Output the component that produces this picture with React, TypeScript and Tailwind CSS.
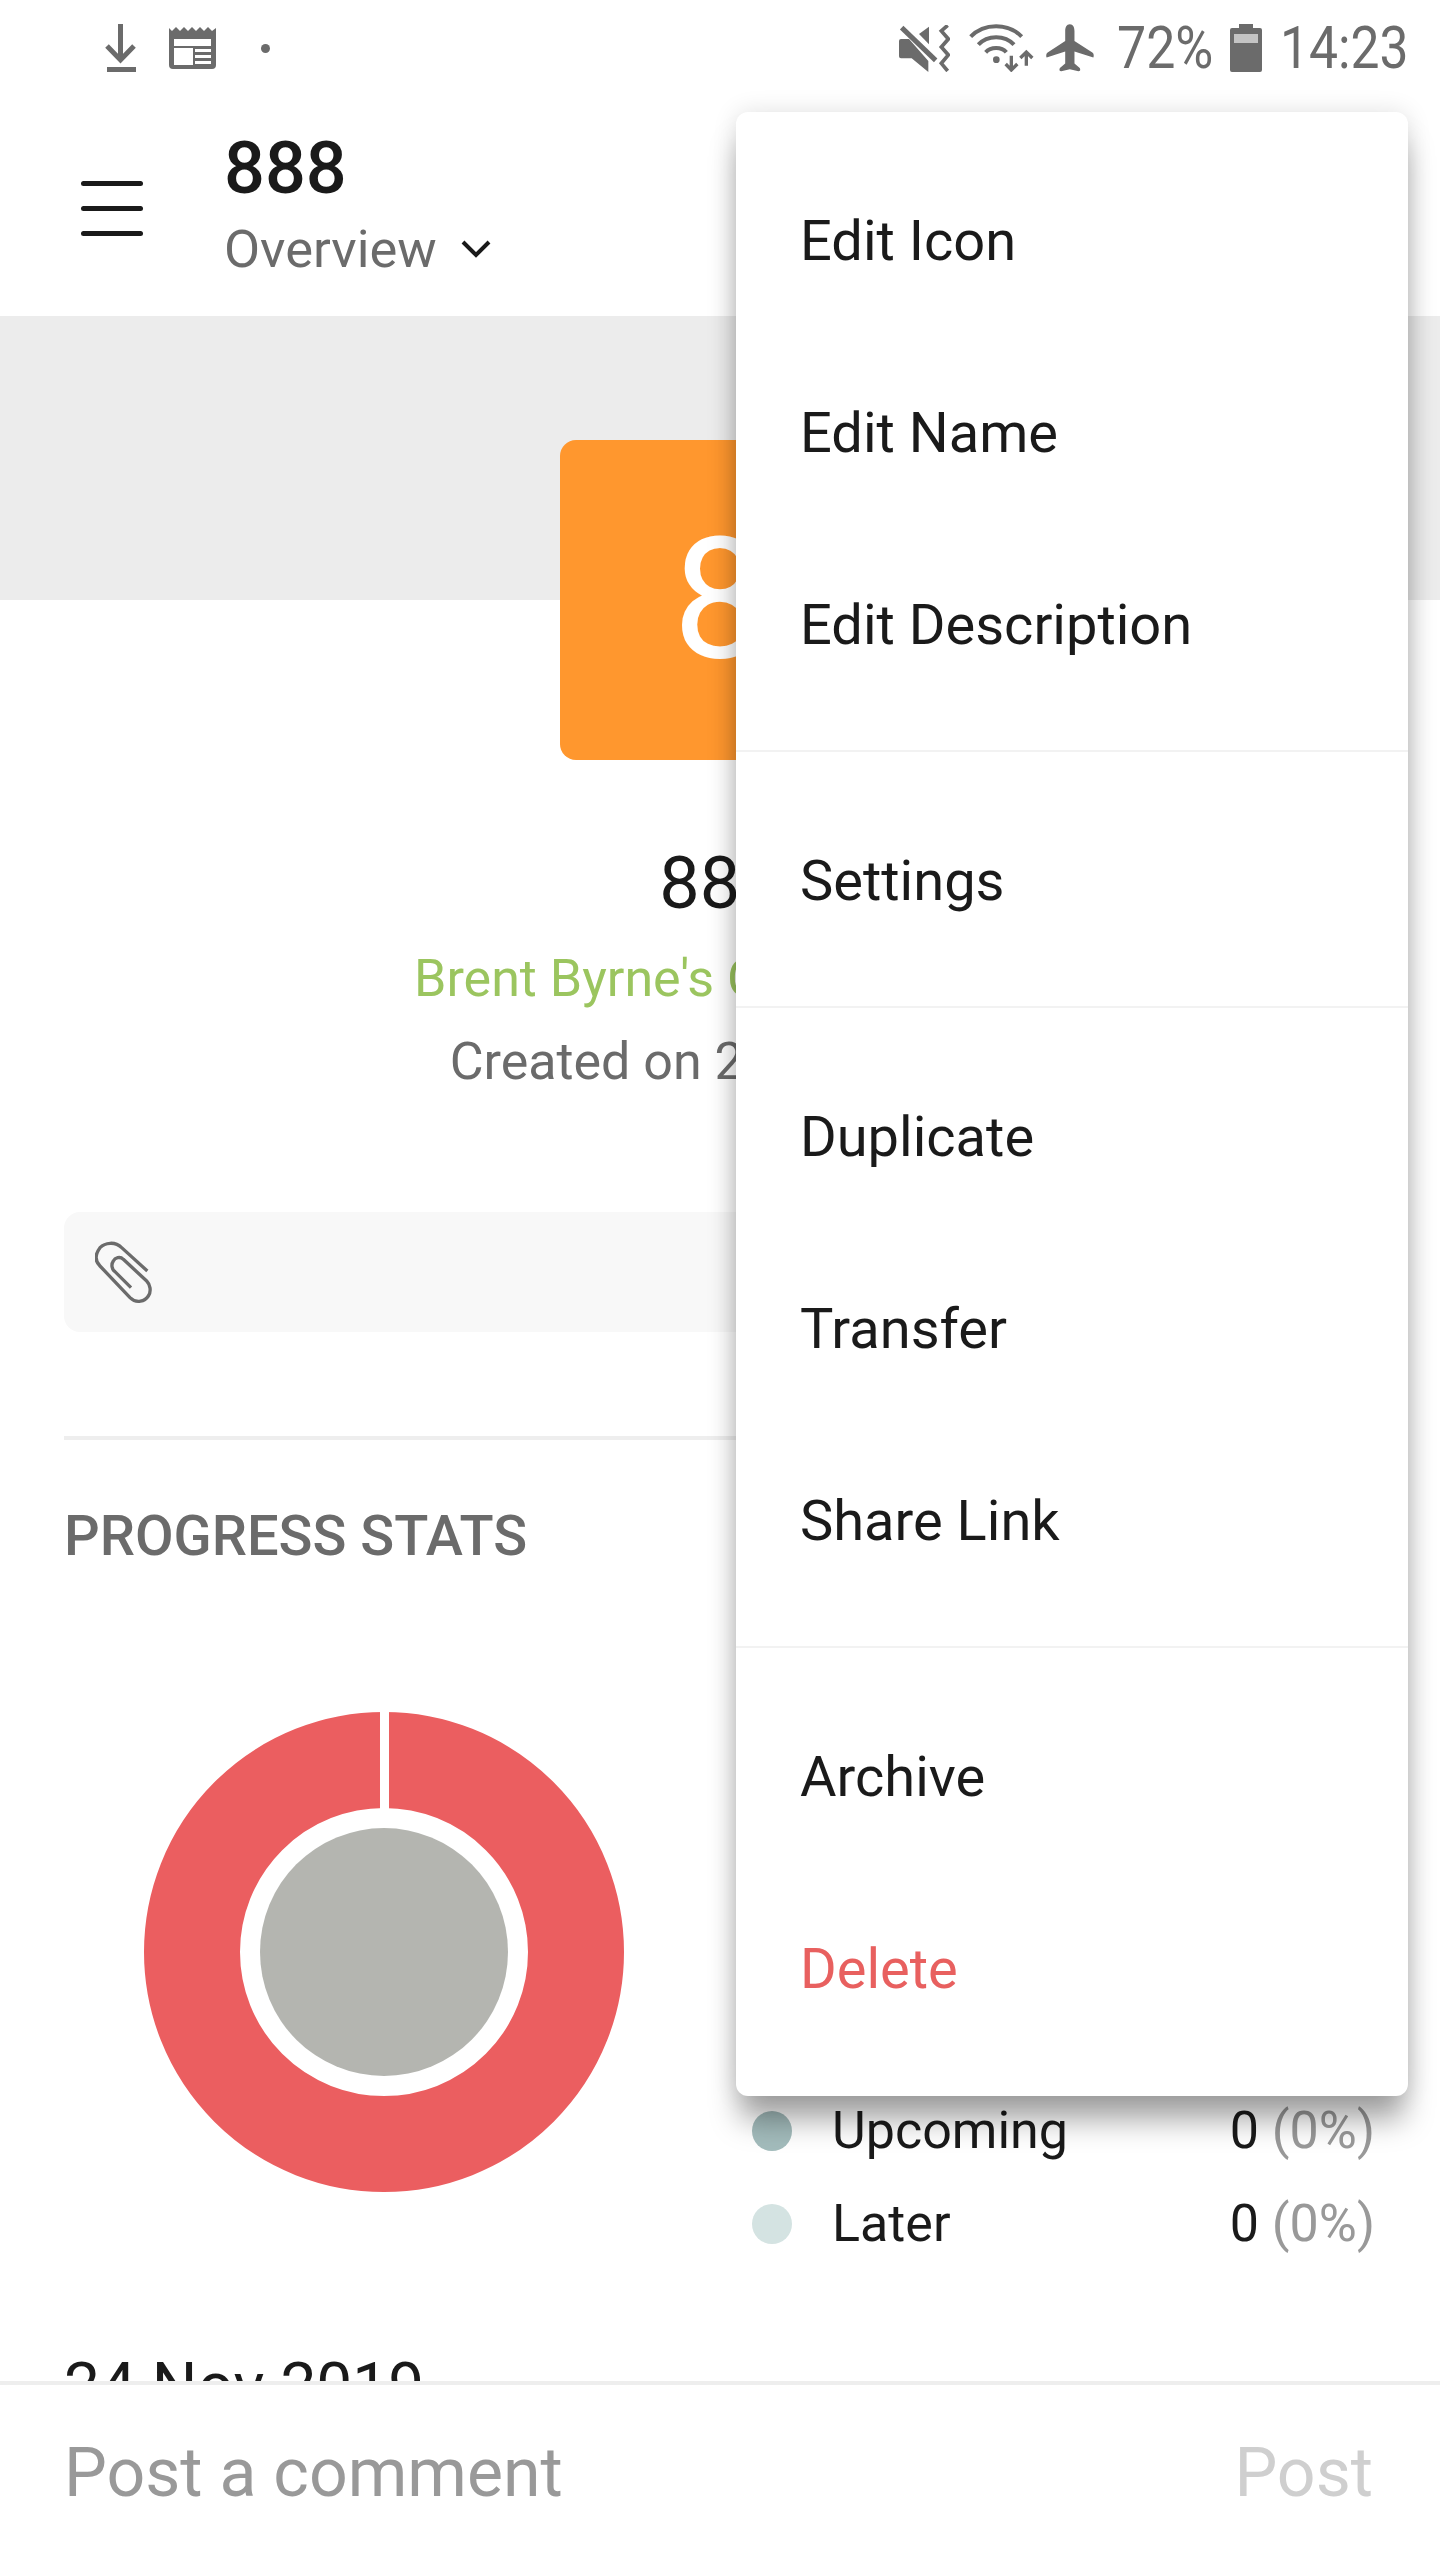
import React from "react";

function Mute() {
  return (
    <svg width="51" height="47" viewBox="0 0 153 141">
      <path d="M6 42 H30 L88 108 V141 L38 100 H6 a6 6 0 0 1 -6 -6 V48 a6 6 0 0 1 6 -6 Z" fill="#6b6b6b" />
      <path d="M60 27 L90 5 V58 Z" fill="#6b6b6b" />
      <path d="M8 8 L110 106" stroke="#6b6b6b" strokeWidth="15" />
      <path d="M146 1 L127 18 L148 42 L127 66 L148 90 L127 115 L146 138" stroke="#6b6b6b" strokeWidth="11" fill="none" />
    </svg>
  );
}

function Wifi() {
  return (
    <svg width="65" height="48" viewBox="0 0 195 144" fill="none">
      <path d="M5 38 C45 -4 118 -4 158 38" stroke="#6b6b6b" strokeWidth="12" />
      <path d="M28 62 C55 32 108 32 135 62" stroke="#6b6b6b" strokeWidth="12" />
      <path d="M50 85 C65 68 98 68 112 85" stroke="#6b6b6b" strokeWidth="12" />
      <circle cx="82" cy="107" r="10" fill="#6b6b6b" />
      <path d="M127 95 V132 M110 120 L127 138 L145 120" stroke="#6b6b6b" strokeWidth="10" />
      <path d="M172 125 V84 M154 102 L172 84 L190 102" stroke="#6b6b6b" strokeWidth="10" />
    </svg>
  );
}

function Plane() {
  return (
    <svg width="48" height="48" viewBox="0 0 145 143">
      <path
        d="M72 0 C82 0 86 10 86 20 V50 L140 85 C145 88 145 98 143 100 L86 82 V118 L102 132 C105 138 103 142 98 142 L72 136 L46 142 C41 142 39 138 42 132 L58 118 V82 L2 100 C0 98 0 88 5 85 L58 50 V20 C58 10 62 0 72 0 Z"
        fill="#6b6b6b"
      />
    </svg>
  );
}

function Battery() {
  return (
    <svg width="32" height="48" viewBox="0 0 32 48">
      <path d="M9 0 H23 V4 H30 a2 2 0 0 1 2 2 V46 a2 2 0 0 1 -2 2 H2 a2 2 0 0 1 -2 -2 V6 a2 2 0 0 1 2 -2 H9 Z" fill="#6b6b6b" />
      <rect x="4" y="10" width="24" height="9" fill="#c4c4c4" />
    </svg>
  );
}

function Download() {
  return (
    <svg width="32" height="48" viewBox="0 0 32 48" fill="none">
      <path d="M15.5 0 V36" stroke="#6b6b6b" strokeWidth="5" />
      <path d="M2 22 L15.5 36 L29 22" stroke="#6b6b6b" strokeWidth="5" />
      <rect x="2" y="43" width="29" height="5" fill="#6b6b6b" />
    </svg>
  );
}

function News() {
  return (
    <svg width="47" height="42" viewBox="0 0 47 42">
      <path d="M0 1 L3 4 L7 0 L11 4 L15 0 L19 4 L23 0 L27 4 L31 0 L35 4 L39 0 L43 4 L47 1 V38 a4 4 0 0 1 -4 4 H4 a4 4 0 0 1 -4 -4 Z" fill="#6b6b6b" />
      <rect x="5" y="12" width="37" height="7" fill="#fff" />
      <rect x="5" y="21" width="19" height="17" fill="#fff" />
      <rect x="26" y="22" width="16" height="3" fill="#fff" />
      <rect x="26" y="28" width="16" height="3" fill="#fff" />
      <rect x="26" y="34" width="16" height="3" fill="#fff" />
    </svg>
  );
}

function Paperclip() {
  return (
    <svg width="57" height="63" viewBox="0 0 171 189" fill="none">
      <path
        d="M157 90 L80 20 C60 0 30 5 15 20 C0 40 0 60 15 75 L105 170 C125 190 150 180 160 165 C170 150 165 130 155 120 L85 55 C75 45 60 50 55 60 C48 70 50 85 60 92 L108 140"
        stroke="#6b6b6b"
        strokeWidth="10"
      />
    </svg>
  );
}

function Chevron() {
  return (
    <svg width="30" height="20" viewBox="0 0 30 20" fill="none">
      <path d="M2 3 L15 16 L28 3" stroke="#1a1a1a" strokeWidth="4" />
    </svg>
  );
}

function Donut() {
  return (
    <svg width="480" height="480" viewBox="0 0 480 480" className="shrink-0">
      <circle cx="240" cy="240" r="192" fill="none" stroke="#eb5e60" strokeWidth="96" />
      <rect x="236" y="0" width="9" height="100" fill="#fff" />
      <circle cx="240" cy="240" r="124" fill="#b4b5b0" />
    </svg>
  );
}

function MenuItem({ label, red }: { label: string; red?: boolean }) {
  return (
    <div className={`flex h-[192px] items-center pl-[64px] pt-[1px] text-[56px] ${red ? "text-[#e8605f]" : "text-[#1a1a1a]"}`}>
      {label}
    </div>
  );
}

function MenuGroup({ items, last }: { items: string[]; last?: boolean }) {
  return (
    <div className={last ? "py-[32px]" : "border-b-[2px] border-[#f2f2f2] pb-[30px] pt-[32px]"}>
      {items.map((i) => (
        <MenuItem key={i} label={i} red={i === "Delete"} />
      ))}
    </div>
  );
}

function LegendRow({ color, label }: { color: string; label: string }) {
  return (
    <div className="flex h-[93px] items-center text-[52px]">
      <div className={`h-[40px] w-[40px] rounded-full ${color}`} />
      <div className="ml-[40px] flex-1 text-[#1a1a1a]">{label}</div>
      <div className="text-[#1a1a1a]">
        0 <span className="text-[#999999]">(0%)</span>
      </div>
    </div>
  );
}

export default function App() {
  return (
    <div className="relative h-[2560px] w-[1440px] overflow-hidden bg-white font-['Roboto',sans-serif]">
      <div className="flex h-[100px] items-start justify-between pl-[105px] pr-[32px] pt-[24px]">
        <div className="flex items-center">
          <Download />
          <div className="ml-[32px]"><News /></div>
          <div className="ml-[45px] h-[9px] w-[9px] rounded-full bg-[#6b6b6b]" />
        </div>
        <div className="flex items-center">
          <Mute />
          <div className="ml-[19px]"><Wifi /></div>
          <div className="ml-[12px]"><Plane /></div>
          <div className="ml-[23px] w-[95px] origin-left scale-x-[0.865] whitespace-nowrap text-[60px] leading-[48px] text-[#6b6b6b]">72%</div>
          <div className="ml-[18px]"><Battery /></div>
          <div className="ml-[18px] w-[128px] origin-left scale-x-[0.86] whitespace-nowrap text-[60px] leading-[48px] text-[#6b6b6b]">14:23</div>
        </div>
      </div>

      <div className="flex h-[216px] items-start pl-[81px]">
        <div className="mt-[81px] flex w-[62px] flex-col gap-[20px]">
          <div className="h-[5px] rounded-full bg-[#1a1a1a]" />
          <div className="h-[5px] rounded-full bg-[#1a1a1a]" />
          <div className="h-[5px] rounded-full bg-[#1a1a1a]" />
        </div>
        <div className="ml-[81px] mt-[27px]">
          <div className="text-[72px] font-medium leading-[84px] text-[#1a1a1a]">888</div>
          <div className="mt-[2px] flex items-center text-[52.5px] leading-[72px] text-[#6b6b6b]">
            Overview
            <div className="ml-[24px]"><Chevron /></div>
          </div>
        </div>
      </div>

      <div className="h-[284px] bg-[#ececec]" />

      <div className="-mt-[160px] flex flex-col items-center">
        <div className="flex h-[320px] w-[320px] items-center justify-center rounded-[16px] bg-[#ff972e] text-[168px] text-white">
          8
        </div>
        <div className="mt-[82px] text-[72px] leading-[84px] text-[#1a1a1a]">888</div>
        <div className="mt-[22px] pr-[5px] text-[52px] leading-[62px] text-[#9bc55f]">Brent Byrne's Organization</div>
        <div className="mt-[21px] pl-[17px] text-[52px] leading-[62px] text-[#6b6b6b]">Created on 24 Nov 2019</div>
      </div>

      <div className="mx-[64px] mt-[119px] flex h-[120px] items-center rounded-[16px] bg-[#f8f8f8] pl-[31px]">
        <Paperclip />
      </div>
      <div className="mx-[64px] mt-[104px] h-[4px] bg-[#eeeeee]" />

      <div className="mx-[64px] mt-[63px] text-[56px] font-medium leading-[66px] text-[#6b6b6b]">PROGRESS STATS</div>

      <div className="mt-[143px] flex items-start pl-[144px] pr-[65px]">
        <Donut />
        <div className="ml-[128px] mt-[372px] flex-1">
          <LegendRow color="bg-[#a3bcbc]" label="Upcoming" />
          <LegendRow color="bg-[#d4e3e2]" label="Later" />
        </div>
      </div>

      <div className="mx-[64px] mt-[79px] text-[64px] leading-[76px] text-[#1a1a1a]">24 Nov 2019</div>

      <div className="absolute bottom-0 left-0 right-0 flex h-[179px] items-center justify-between border-t-[4px] border-[#eeeeee] bg-white pl-[64px] pr-[67px] text-[68px]">
        <span className="text-[#999999]">Post a comment</span>
        <span className="text-[#cfcfcf]">Post</span>
      </div>

      <div className="absolute left-[736px] top-[112px] w-[672px] rounded-[12px] bg-white shadow-[0_28px_30px_-4px_rgba(0,0,0,0.35),0_0_24px_rgba(0,0,0,0.12)]">
        <MenuGroup items={["Edit Icon", "Edit Name", "Edit Description"]} />
        <MenuGroup items={["Settings"]} />
        <MenuGroup items={["Duplicate", "Transfer", "Share Link"]} />
        <MenuGroup items={["Archive", "Delete"]} last />
      </div>
    </div>
  );
}
